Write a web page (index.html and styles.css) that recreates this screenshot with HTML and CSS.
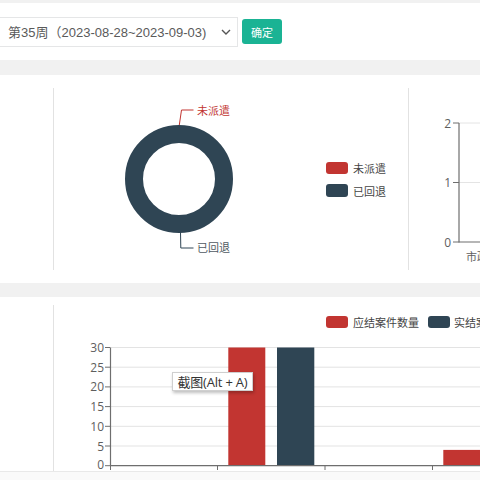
FILE: index.html
```html
<!DOCTYPE html>
<html lang="zh-CN">
<head>
<meta charset="utf-8">
<title>周报统计</title>
<link rel="stylesheet" href="styles.css">
</head>
<body>
<div class="page">
  <div class="toolbar">
    <div class="select">
      <span class="select-text">第35周（2023-08-28~2023-09-03)</span>
      <svg class="chevron" width="10" height="6" viewBox="0 0 10 6"><path d="M1 1 L5 5 L9 1" fill="none" stroke="#555" stroke-width="1.4"/></svg>
    </div>
    <div class="btn">确定</div>
  </div>

  <div class="panel panel-top">
    <div class="spacer"></div>
    <div class="cell cell-pie">
      <svg class="chart" width="354" height="182" viewBox="54 88 354 182">
        <circle cx="179" cy="179" r="45" fill="none" stroke="#2f4554" stroke-width="18"/>
        <path d="M179.3 125 L181.5 110 L193.5 110" fill="none" stroke="#c23531" stroke-width="1"/>
        <text x="197" y="110" class="lbl lbl-red">未派遣</text>
        <path d="M180.5 232 L180.8 248 L193.5 248" fill="none" stroke="#2f4554" stroke-width="1"/>
        <text x="197" y="246.5" class="lbl lbl-gray">已回退</text>
        <rect x="326" y="162" width="22" height="12" rx="3" fill="#c23531"/>
        <text x="353" y="168" class="lbl lbl-legend">未派遣</text>
        <rect x="326" y="184" width="22" height="13" rx="3" fill="#2f4554"/>
        <text x="353" y="190.5" class="lbl lbl-legend">已回退</text>
      </svg>
    </div>
    <div class="cell cell-side">
      <svg class="chart" width="120" height="182" viewBox="409 88 120 182">
        <line x1="459" y1="123" x2="529" y2="123" stroke="#e4e4e4"/>
        <line x1="459" y1="182.5" x2="529" y2="182.5" stroke="#e4e4e4"/>
        <line x1="453" y1="123" x2="459" y2="123" stroke="#6e6e6e"/>
        <line x1="453" y1="182.5" x2="459" y2="182.5" stroke="#6e6e6e"/>
        <line x1="453" y1="242" x2="459" y2="242" stroke="#6e6e6e"/>
        <line x1="459" y1="123" x2="459" y2="242.5" stroke="#6e6e6e" stroke-width="1.2"/>
        <line x1="459" y1="242" x2="529" y2="242" stroke="#6e6e6e" stroke-width="1.2"/>
        <text x="451" y="123" class="lbl axis" text-anchor="end">2</text>
        <text x="451" y="182.5" class="lbl axis" text-anchor="end">1</text>
        <text x="451" y="242" class="lbl axis" text-anchor="end">0</text>
        <text x="466" y="255.5" class="lbl axis-x">市政</text>
      </svg>
    </div>
  </div>

  <div class="panel panel-bottom">
    <div class="spacer"></div>
    <div class="cell cell-bar">
      <svg class="chart" width="426" height="166" viewBox="54 305 426 166">
        <rect x="326" y="316" width="22" height="12" rx="3" fill="#c23531"/>
        <text x="353" y="322" class="lbl lbl-legend">应结案件数量</text>
        <rect x="428" y="316" width="22" height="12" rx="3" fill="#2f4554"/>
        <text x="454" y="322" class="lbl lbl-legend">实结案件数量</text>

        <g stroke="#e3e3e3" stroke-width="1">
          <line x1="110" y1="347.5" x2="480" y2="347.5"/>
          <line x1="110" y1="367.2" x2="480" y2="367.2"/>
          <line x1="110" y1="386.9" x2="480" y2="386.9"/>
          <line x1="110" y1="406.6" x2="480" y2="406.6"/>
          <line x1="110" y1="426.3" x2="480" y2="426.3"/>
          <line x1="110" y1="446" x2="480" y2="446"/>
        </g>
        <g stroke="#6e6e6e" stroke-width="1">
          <line x1="105" y1="347.5" x2="110" y2="347.5"/>
          <line x1="105" y1="367.2" x2="110" y2="367.2"/>
          <line x1="105" y1="386.9" x2="110" y2="386.9"/>
          <line x1="105" y1="406.6" x2="110" y2="406.6"/>
          <line x1="105" y1="426.3" x2="110" y2="426.3"/>
          <line x1="105" y1="446" x2="110" y2="446"/>
          <line x1="105" y1="465.7" x2="110" y2="465.7"/>
          <line x1="110.5" y1="465.7" x2="110.5" y2="470"/>
          <line x1="217.5" y1="465.7" x2="217.5" y2="470"/>
          <line x1="325" y1="465.7" x2="325" y2="470"/>
          <line x1="432.5" y1="465.7" x2="432.5" y2="470"/>
        </g>
        <rect x="228.3" y="347.5" width="37" height="118.2" fill="#c23531"/>
        <rect x="277" y="347.5" width="37.3" height="118.2" fill="#2f4554"/>
        <rect x="443.3" y="449.9" width="37" height="15.8" fill="#c23531"/>
        <line x1="110.5" y1="347.5" x2="110.5" y2="466" stroke="#6e6e6e" stroke-width="1.2"/>
        <line x1="110" y1="465.7" x2="480" y2="465.7" stroke="#6e6e6e" stroke-width="1.2"/>

        <text x="104" y="347.5" class="lbl axis" text-anchor="end">30</text>
        <text x="104" y="367.2" class="lbl axis" text-anchor="end">25</text>
        <text x="104" y="386.9" class="lbl axis" text-anchor="end">20</text>
        <text x="104" y="406.6" class="lbl axis" text-anchor="end">15</text>
        <text x="104" y="426.3" class="lbl axis" text-anchor="end">10</text>
        <text x="104" y="446" class="lbl axis" text-anchor="end">5</text>
        <text x="104" y="464.5" class="lbl axis" text-anchor="end">0</text>
      </svg>
    </div>
    <div class="tooltip">截图(Alt + A)</div>
  </div>
  <div class="footer"></div>
</div>
</body>
</html>
```

FILE: styles.css
```css
html, body {
  margin: 0;
  padding: 0;
}

body {
  width: 480px;
  height: 480px;
  overflow: hidden;
  background: #f1f1f1;
  font-family: "Liberation Sans", "Noto Sans CJK SC", sans-serif;
  color: #555;
}

.page {
  padding-top: 3px;
  width: 480px;
}

.toolbar {
  height: 57px;
  background: #fff;
  display: flex;
  align-items: center;
  gap: 4px;
}

.select {
  width: 238px;
  height: 30px;
  box-sizing: border-box;
  border: 1px solid #e5e6e7;
  border-left: none;
  background: #fff;
  display: flex;
  align-items: center;
  justify-content: space-between;
  padding: 0 6px 0 8px;
  font-size: 13px;
  color: #5a5a5a;
  white-space: nowrap;
}

.chevron {
  display: block;
}

.btn {
  width: 40px;
  height: 25px;
  background: #1ab394;
  color: #fff;
  border-radius: 3px;
  font-size: 11px;
  display: flex;
  align-items: center;
  justify-content: center;
  font-family: "Noto Sans CJK SC", sans-serif;
}

.panel {
  background: #fff;
  display: flex;
  overflow: hidden;
  box-sizing: border-box;
}

.panel-top {
  margin-top: 15px;
  height: 208px;
  padding: 13px 0;
}

.panel-bottom {
  position: relative;
  margin-top: 14px;
  height: 174px;
  padding-top: 8px;
}

.spacer {
  width: 53px;
  flex: none;
}

.cell {
  border-left: 1px solid #e2e2e2;
  flex: none;
}

.cell-pie {
  width: 354px;
}

.cell-side {
  width: 120px;
}

.cell-bar {
  width: 426px;
}

.chart {
  display: block;
}

.lbl {
  font-family: "Noto Sans CJK SC", sans-serif;
  font-size: 11px;
  dominant-baseline: central;
}

.lbl-red {
  fill: #c23531;
}

.lbl-gray {
  fill: #4f5962;
}

.lbl-legend {
  fill: #444;
}

.axis {
  font-family: "Open Sans", "Noto Sans CJK SC", sans-serif;
  font-size: 12px;
  fill: #5e5e5e;
}

.axis-x {
  font-family: "Noto Sans CJK SC", sans-serif;
  font-size: 11px;
  fill: #5e5e5e;
}

.tooltip {
  position: absolute;
  left: 172px;
  top: 75px;
  width: 81px;
  height: 19px;
  box-sizing: border-box;
  background: #fff;
  border: 1px solid #cfcfcf;
  box-shadow: 1px 2px 3px rgba(0, 0, 0, 0.25);
  font-family: "Open Sans", "Noto Sans CJK SC", sans-serif;
  font-size: 13px;
  letter-spacing: -0.2px;
  color: #333;
  display: flex;
  align-items: center;
  justify-content: center;
  white-space: nowrap;
}

.footer {
  height: 20px;
  background: #fafafa;
  border-top: 1px solid #e9e9e9;
}
```
